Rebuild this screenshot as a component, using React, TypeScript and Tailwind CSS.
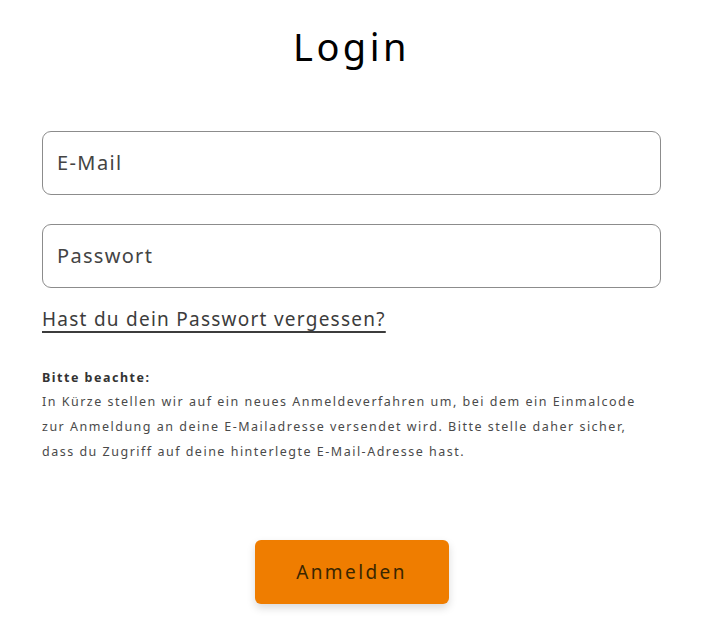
import React from "react";

export default function App() {
  return (
    <div className="w-[712px] h-[630px] bg-white" style={{ fontFamily: '"Noto Sans", "Open Sans", sans-serif' }}>
      <div className="ml-[42px] w-[619px] flex flex-col">
        <h1 className="mt-[20px] text-center text-[38px] leading-[52px] text-black font-normal tracking-[3.5px]">Login</h1>
        <div className="mt-[59px] h-[64px] rounded-[9px] border-[1.5px] border-[#8c8c8c] flex items-center px-[14px] text-[20px] text-[#444] tracking-[1.4px]">E-Mail</div>
        <div className="mt-[29px] h-[64px] rounded-[9px] border-[1.5px] border-[#8c8c8c] flex items-center px-[14px] text-[20px] text-[#444] tracking-[1.3px]">Passwort</div>
        <div className="mt-[17px]">
          <a className="text-[19px] leading-[28px] text-[#3c3c3c] underline underline-offset-[5px] decoration-[1.5px] tracking-[1.25px]">Hast du dein Passwort vergessen?</a>
        </div>
        <div className="mt-[33px] text-[12.5px] text-[#333] font-bold tracking-[1.5px] leading-[23px]">Bitte beachte:</div>
        <p className="w-[610px] text-[12.5px] text-[#4a4a4a] leading-[25px] tracking-[1.5px]">
          In Kürze stellen wir auf ein neues Anmeldeverfahren um, bei dem ein Einmalcode zur Anmeldung an deine E-Mailadresse versendet wird. Bitte stelle daher sicher, dass du Zugriff auf deine hinterlegte E-Mail-Adresse hast.
        </p>
        <div className="mt-[76px] flex justify-center">
          <button className="w-[194px] h-[64px] rounded-[6px] bg-[#ef7d00] text-[19px] text-[#3a2600] tracking-[2.4px] shadow-[0_4px_8px_rgba(0,0,0,0.15)]">Anmelden</button>
        </div>
      </div>
    </div>
  );
}
